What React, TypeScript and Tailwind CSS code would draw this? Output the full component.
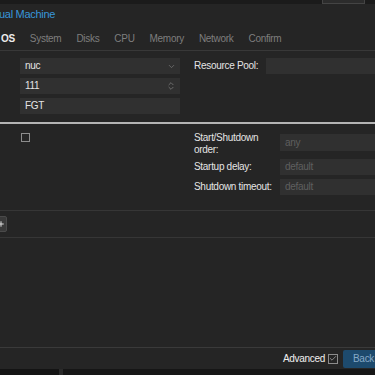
import { ChevronDown, ChevronsUpDown, Check, Plus } from "lucide-react";

const tabs = ["OS", "System", "Disks", "CPU", "Memory", "Network", "Confirm"];

const Field = ({
  value,
  muted,
  icon,
  tall,
}: {
  value: string;
  muted?: boolean;
  icon?: "select" | "spin";
  tall?: boolean;
}) => (
  <div
    className={`${tall ? "h-[17px]" : "h-[16px]"} bg-[#303030] flex items-center justify-between pl-[5px] pr-[4px]`}
  >
    <span className={muted ? "text-[#5f5f5f]" : "text-[#e4e4e4]"}>{value}</span>
    {icon === "select" && <ChevronDown className="w-[9px] h-[9px] text-[#777]" strokeWidth={2} />}
    {icon === "spin" && <ChevronsUpDown className="w-[10px] h-[10px] text-[#777]" strokeWidth={2} />}
  </div>
);

const App = () => {
  return (
    <div
      className="w-[375px] h-[375px] overflow-hidden bg-[#252525] flex flex-col text-[10px] tracking-[-0.3px] leading-none whitespace-nowrap"
      style={{ fontFamily: '"Liberation Sans", Arial, sans-serif' }}
    >
      {/* top strip behind the window */}
      <div className="h-[4px] bg-[#1b1b1b] flex justify-end shrink-0">
        <div className="w-[43px] h-full mr-[10px] bg-[#2c2c2c] border-x border-b border-[#444]" />
      </div>

      {/* title */}
      <div className="h-[21px] flex items-center shrink-0">
        <span className="-ml-[1px] text-[11px] text-[#3896da]">ual Machine</span>
      </div>

      {/* tabs */}
      <div className="h-[26px] flex items-center gap-[15px] pt-[3px] border-b border-[#383838] shrink-0">
        {tabs.map((t, i) => (
          <span key={t} className={i === 0 ? "text-[#ececec] font-bold pl-[1px]" : "text-[#7e7e7e]"}>
            {t}
          </span>
        ))}
      </div>

      {/* general */}
      <div className="h-[71px] flex pt-[7px] shrink-0">
        <div className="w-[180px] pl-[20px] flex flex-col gap-[4px]">
          <Field value="nuc" icon="select" />
          <Field value="111" icon="spin" />
          <Field value="FGT" />
        </div>
        <div className="flex-1 pl-[14px] flex">
          <span className="w-[72px] h-[16px] flex items-center text-[#e4e4e4]">Resource Pool:</span>
          <div className="flex-1 h-[16px] bg-[#303030]" />
        </div>
      </div>

      <div className="h-[2px] bg-[#b4b4b4] shrink-0" />

      {/* advanced */}
      <div className="h-[87px] flex pt-[10px] border-b border-[#363636] shrink-0">
        <div className="w-[180px] pl-[21px]">
          <div className="w-[9px] h-[9px] border border-[#8c8c8c] -mt-[1px]" />
        </div>
        <div className="flex-1 pl-[14px] flex flex-col">
          <div className="flex items-start h-[17px]">
            <span className="w-[86px] text-[#e4e4e4] leading-[12px] -mt-[2px]">
              Start/Shutdown
              <br />
              order:
            </span>
            <div className="flex-1">
              <Field value="any" muted tall />
            </div>
          </div>
          <div className="flex items-center mt-[8px]">
            <span className="w-[86px] text-[#e4e4e4]">Startup delay:</span>
            <div className="flex-1">
              <Field value="default" muted />
            </div>
          </div>
          <div className="flex items-center mt-[4px]">
            <span className="w-[86px] text-[#e4e4e4]">Shutdown timeout:</span>
            <div className="flex-1">
              <Field value="default" muted />
            </div>
          </div>
        </div>
      </div>

      {/* add row */}
      <div className="h-[27px] flex items-center border-b border-[#363636] shrink-0">
        <div className="w-[15px] h-[16px] -ml-[8px] bg-[#3a3a3a] rounded-[2px] border border-[#4a4a4a] flex items-center justify-end pr-[1px]">
          <Plus className="w-[8px] h-[8px] text-[#e0e0e0]" strokeWidth={3} />
        </div>
      </div>

      <div className="flex-1 border-b border-[#3a3a3a]" />

      {/* footer */}
      <div className="h-[21px] flex items-center justify-end gap-[3px] shrink-0">
        <span className="text-[#f0f0f0]">Advanced</span>
        <div className="w-[10px] h-[10px] border border-[#8c8c8c] flex items-center justify-center">
          <Check className="w-[9px] h-[9px] text-[#bbbbbb]" strokeWidth={2} />
        </div>
        <div className="ml-[2px] w-[40px] h-[18px] bg-[#1d4a6d] rounded-[2px] flex items-center pl-[10px] -mr-[8px]">
          <span className="text-[#86a9c6]">Back</span>
        </div>
      </div>

      {/* bottom strip */}
      <div className="h-[6px] flex shrink-0">
        <div className="w-[59px] bg-[#141414]" />
        <div className="w-[4px] bg-[#2a2a2a]" />
        <div className="flex-1 bg-[#161616]" />
      </div>
    </div>
  );
};

export default App;
